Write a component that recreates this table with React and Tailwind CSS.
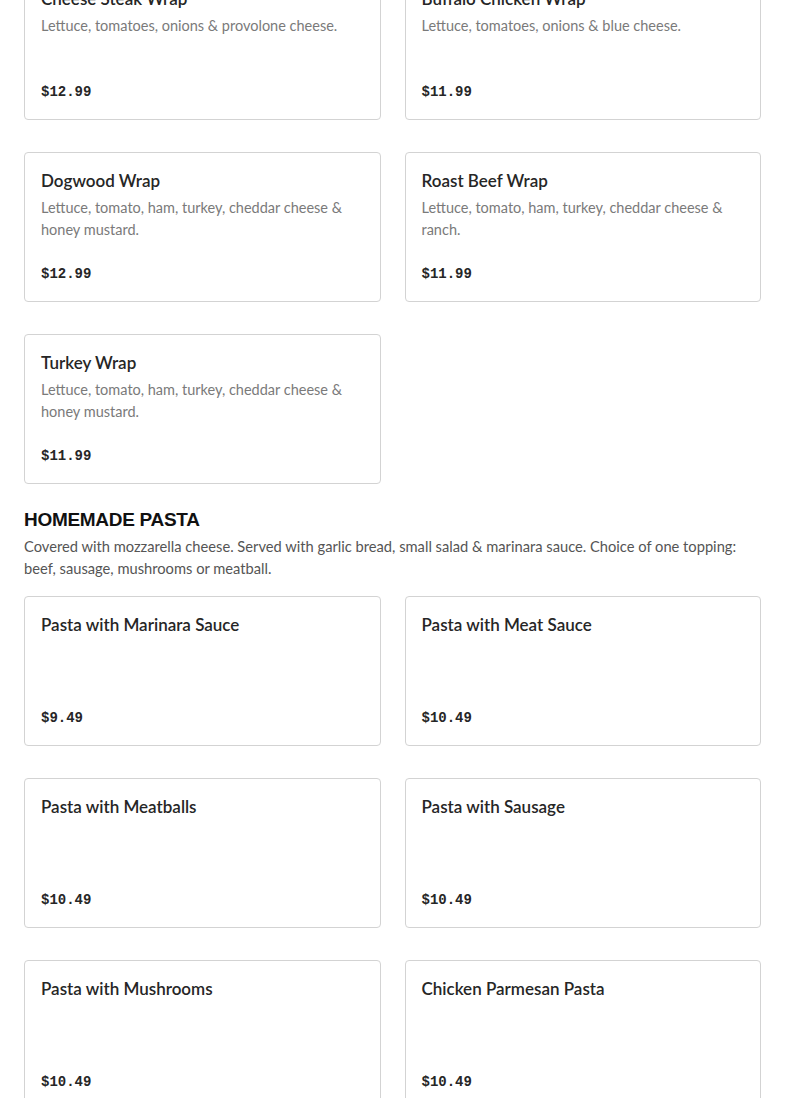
import React from "react";

const wraps = [
  { name: "Cheese Steak Wrap", desc: "Lettuce, tomatoes, onions & provolone cheese.", price: "$12.99" },
  { name: "Buffalo Chicken Wrap", desc: "Lettuce, tomatoes, onions & blue cheese.", price: "$11.99" },
  { name: "Dogwood Wrap", desc: "Lettuce, tomato, ham, turkey, cheddar cheese & honey mustard.", price: "$12.99" },
  { name: "Roast Beef Wrap", desc: "Lettuce, tomato, ham, turkey, cheddar cheese & ranch.", price: "$11.99" },
  { name: "Turkey Wrap", desc: "Lettuce, tomato, ham, turkey, cheddar cheese & honey mustard.", price: "$11.99" },
];

const pasta = [
  { name: "Pasta with Marinara Sauce", price: "$9.49" },
  { name: "Pasta with Meat Sauce", price: "$10.49" },
  { name: "Pasta with Meatballs", price: "$10.49" },
  { name: "Pasta with Sausage", price: "$10.49" },
  { name: "Pasta with Mushrooms", price: "$10.49" },
  { name: "Chicken Parmesan Pasta", price: "$10.49" },
];

function Card({ name, desc, price }) {
  return (
    <div className="flex h-[150px] flex-col rounded-[4px] border border-[#d3d3d3] bg-white px-4 pt-[18px] pb-[17px]">
      <div className="text-[17px] leading-[20px] font-semibold text-[#262626]">{name}</div>
      {desc && (
        <div className="mt-[6px] text-[14.5px] leading-[22px] text-[#7a7a7a]">{desc}</div>
      )}
      <div className="mt-auto font-['Liberation_Mono',monospace] text-[14px] leading-[20px] font-bold text-[#262626]">
        {price}
      </div>
    </div>
  );
}

export default function App() {
  return (
    <div className="min-h-screen bg-white font-['Lato',sans-serif]">
      <div className="mt-[-30px] px-6">
        <div className="grid grid-cols-2 gap-x-6 gap-y-8">
          {wraps.map((w) => (
            <Card key={w.name} {...w} />
          ))}
        </div>
        <h2 className="mt-[25px] font-['Liberation_Sans',sans-serif] text-[19px] leading-[22px] font-extrabold uppercase tracking-[-0.3px] text-[#111]">
          Homemade Pasta
        </h2>
        <p className="mt-[4px] text-[14.7px] leading-[22px] text-[#555]">
          Covered with mozzarella cheese. Served with garlic bread, small salad &amp; marinara sauce. Choice of one topping: beef, sausage, mushrooms or meatball.
        </p>
        <div className="mt-[17px] grid grid-cols-2 gap-x-6 gap-y-8 pb-8">
          {pasta.map((p) => (
            <Card key={p.name} {...p} />
          ))}
        </div>
      </div>
    </div>
  );
}
